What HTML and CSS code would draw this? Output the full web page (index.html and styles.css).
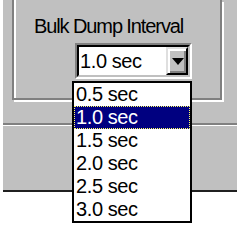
FILE: index.html
```html
<!DOCTYPE html>
<html>
<head>
<meta charset="utf-8">
<link rel="stylesheet" href="styles.css">
</head>
<body>
<div class="panel">
  <div class="groupbox">
    <div class="label">Bulk Dump Interval</div>
    <div class="combo">
      <div class="combo-inner">
        <div class="combo-text">1.0 sec</div>
        <div class="combo-btn">
          <svg width="12" height="7" viewBox="0 0 12 7"><polygon points="0,0 12,0 6,7" fill="#000"/></svg>
        </div>
      </div>
    </div>
  </div>
  <div class="separator"></div>
  <ul class="droplist">
    <li class="item">0.5 sec</li>
    <li class="item selected">1.0 sec</li>
    <li class="item">1.5 sec</li>
    <li class="item">2.0 sec</li>
    <li class="item">2.5 sec</li>
    <li class="item">3.0 sec</li>
  </ul>
</div>
</body>
</html>
```

FILE: styles.css
```css
html, body {
  margin: 0;
  padding: 0;
}
body {
  width: 237px;
  height: 226px;
  overflow: hidden;
  background: #ffffff;
  font-family: "Liberation Sans", Arial, sans-serif;
  color: #000;
}
.panel {
  position: relative;
  margin-left: 3px;
  height: 190px;
  background: #c0c0c0;
  border-bottom: 2px solid #202020;
  display: flex;
  flex-direction: column;
}
.groupbox {
  box-sizing: border-box;
  margin-left: 9px;
  width: 210px;
  height: 100px;
  border: 2px solid #808080;
  border-top: 0;
  box-shadow: inset 2px 0 0 #fff, 2px 2px 0 #fff;
  padding-top: 16px;
  padding-left: 2px;
  display: flex;
  flex-direction: column;
}
.label {
  font-size: 20px;
  line-height: 20px;
  letter-spacing: -1.1px;
  padding-left: 18px;
  white-space: nowrap;
}
.combo {
  box-sizing: border-box;
  margin-top: 7px;
  margin-left: 59px;
  width: 117px;
  height: 36px;
  border: 2px solid;
  border-color: #808080 #fff #fff #808080;
}
.combo-inner {
  box-sizing: border-box;
  height: 100%;
  border: 2px solid;
  border-color: #000 #c0c0c0 #c0c0c0 #000;
  background: #fff;
  display: flex;
}
.combo-text {
  flex: 1;
  font-size: 20px;
  line-height: 28px;
  letter-spacing: -0.4px;
  padding-left: 1px;
  white-space: nowrap;
}
.combo-btn {
  box-sizing: border-box;
  width: 22px;
  height: 28px;
  background: #c0c0c0;
  border: 2px solid;
  border-color: #dfdfdf #000 #000 #dfdfdf;
  box-shadow: inset 2px 2px 0 #fff, inset -2px -2px 0 #808080;
  display: flex;
  align-items: center;
  justify-content: center;
}
.combo-btn svg {
  display: block;
  margin-left: 1px;
}
.separator {
  margin-top: 23px;
  height: 2px;
  background: #808080;
  border-bottom: 1px solid #fff;
}
.droplist {
  position: absolute;
  left: 69px;
  top: 81px;
  box-sizing: border-box;
  width: 120px;
  height: 142px;
  margin: 0;
  padding: 0;
  list-style: none;
  background: #fff;
  border: 2px solid #000;
}
.item {
  box-sizing: border-box;
  height: 23px;
  font-size: 20px;
  line-height: 23px;
  letter-spacing: -0.4px;
  padding-left: 2px;
  white-space: nowrap;
}
.item.selected {
  background: #000080;
  color: #fff;
  outline: 1px dotted #ffff60;
  outline-offset: -1px;
}
```
